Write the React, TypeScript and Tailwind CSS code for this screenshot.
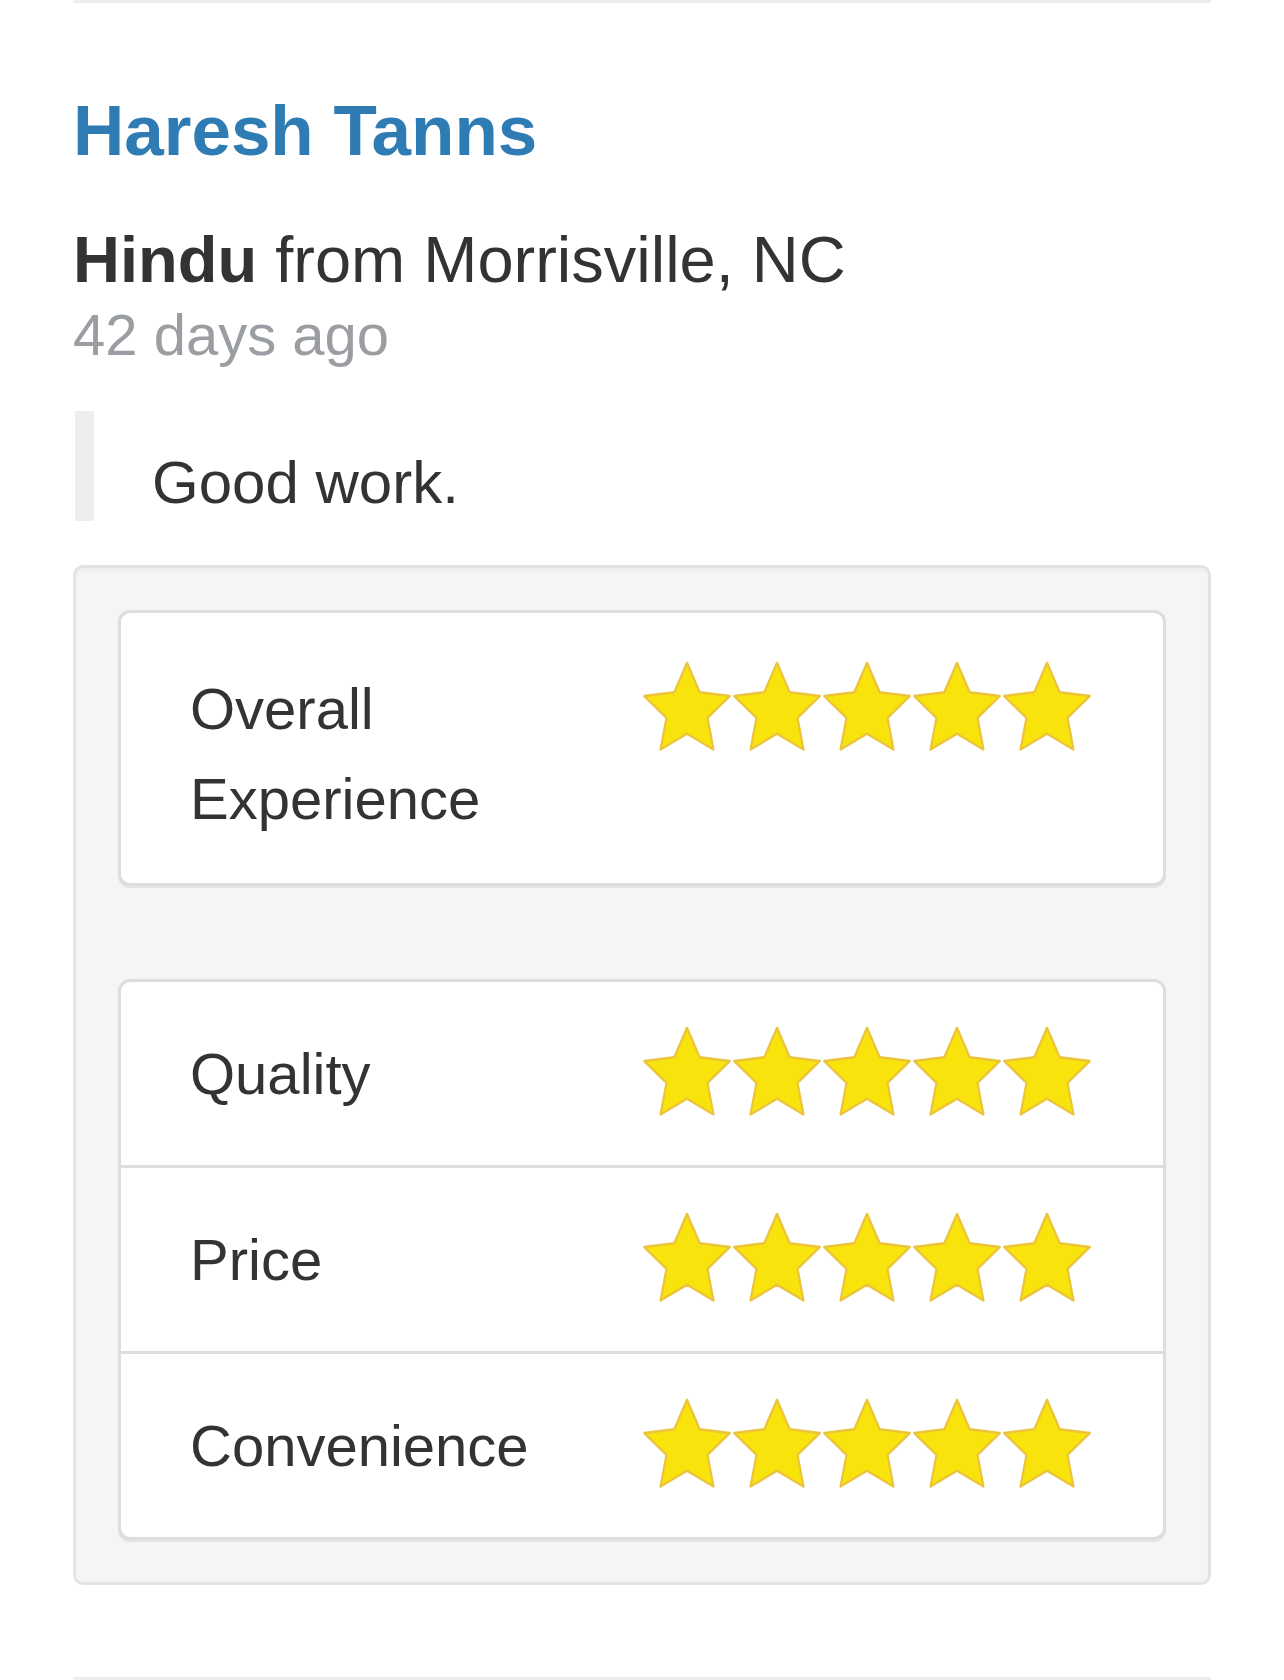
import React from 'react';

type Rating = {
  label: string[];
  stars: number;
};

const overall: Rating = { label: ['Overall', 'Experience'], stars: 5 };
const details: Rating[] = [
  { label: ['Quality'], stars: 5 },
  { label: ['Price'], stars: 5 },
  { label: ['Convenience'], stars: 5 }
];

function Star() {
  return (
    <svg viewBox="0 0 100 96" preserveAspectRatio="none" className="w-[90px] h-[92px] shrink-0">
      <polygon
        points="50,3 64.1,33.6 97.5,37.6 72.8,60.4 79.4,93.4 50,77 20.6,93.4 27.2,60.4 2.5,37.6 35.9,33.6"
        fill="#f8e40c"
        stroke="#ebc43c"
        strokeWidth="2.5"
        strokeLinejoin="round" />
    </svg>);

}

function Stars({ count }: { count: number }) {
  return (
    <div className="flex items-start -mt-[4px]">
      {Array.from({ length: count }).map((_, i) =>
      <Star key={i} />
      )}
    </div>);

}

function RatingRow({ rating, first }: { rating: Rating; first?: boolean }) {
  return (
    <div
      className={`grid grid-cols-[452px_1fr] pl-[69px] ${
      first ? 'pt-[51px] pb-[39px]' : 'pt-[47px] pb-[46px]'}`
      }>
      
      <div className="text-[58px] leading-[90px] text-[#333]">
        {rating.label.map((l) =>
        <div key={l}>{l}</div>
        )}
      </div>
      <div className="h-[90px]">
        <Stars count={rating.stars} />
      </div>
    </div>);

}

export default function App() {
  return (
    <div className="min-h-[1680px] bg-white px-[73px] font-['Liberation_Sans',Arial,sans-serif] text-[#333]">
      <div className="w-[1138px]">
        <div className="h-[3px] bg-[#eeeeee]" />

        {/* reviewer */}
        <h2 className="mt-[92px] text-[71px] font-bold leading-none text-[#2e7cb3]">
          Haresh Tanns
        </h2>
        <p className="mt-[61px] text-[65px] leading-none">
          <span className="font-bold">Hindu</span> from Morrisville, NC
        </p>
        <p className="mt-[14px] text-[58px] leading-none text-[#9a9da2]">42 days ago</p>

        {/* comment */}
        <blockquote className="ml-[2px] mt-[47px] border-l-[19px] border-[#eeeeee] pl-[58px] pt-[42px] pb-[8px] text-[60px] leading-none">
          Good work.
        </blockquote>

        {/* ratings well */}
        <div className="mt-[44px] rounded-[10px] border-[3px] border-[#e3e3e3] bg-[#f5f5f5] p-[42px] shadow-[inset_0_3px_3px_rgba(0,0,0,0.03)]">
          <div className="rounded-[12px] border-[3px] border-[#dddddd] bg-white shadow-[0_2px_0_#e4e4e4]">
            <RatingRow rating={overall} first />
          </div>

          <div className="mt-[93px] rounded-[12px] border-[3px] border-[#dddddd] bg-white divide-y-[3px] divide-[#dddddd] shadow-[0_2px_0_#e4e4e4]">
            {details.map((r) =>
            <RatingRow key={r.label[0]} rating={r} />
            )}
          </div>
        </div>

        <div className="mt-[92px] h-[4px] bg-[#eeeeee]" />
      </div>
    </div>);

}
